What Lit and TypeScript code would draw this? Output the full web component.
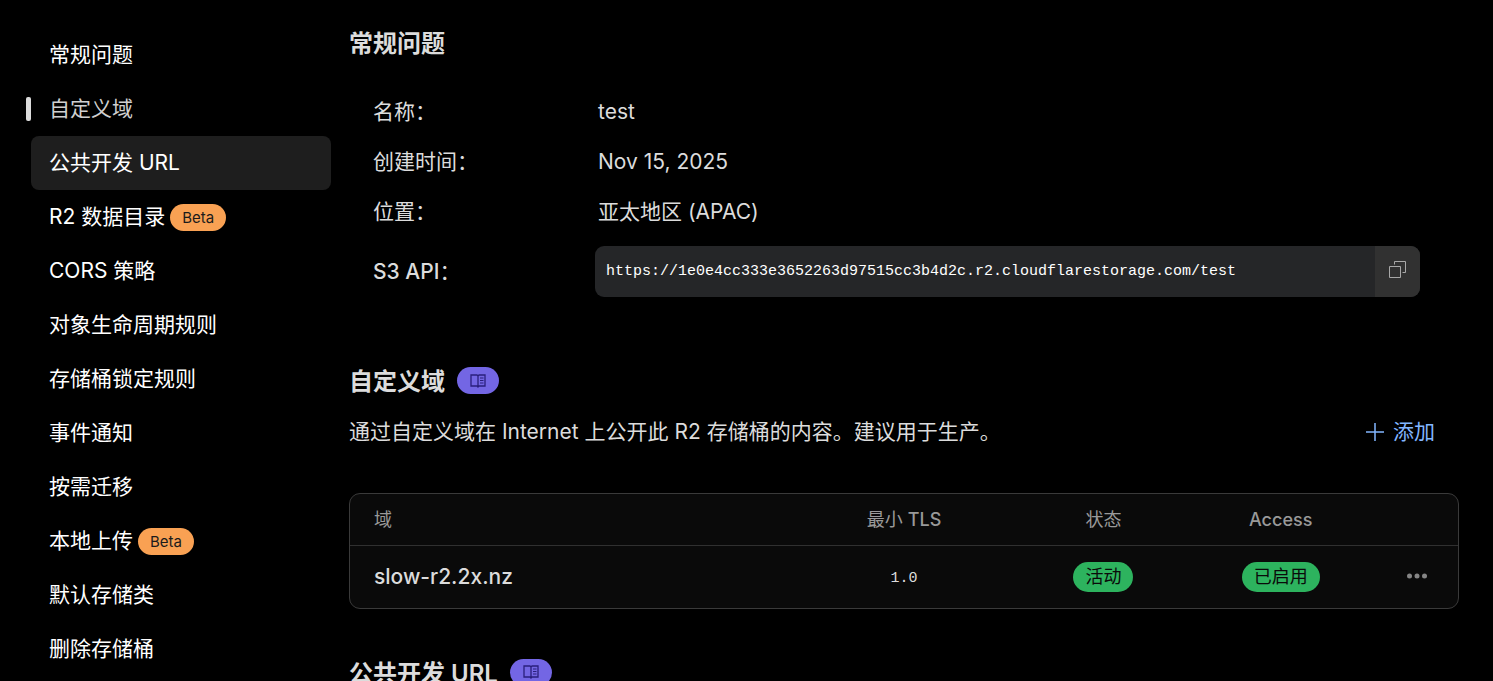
import { LitElement, html, css, svg } from "lit";
import { customElement, property } from "lit/decorators.js";
import { classMap } from "lit/directives/class-map.js";

interface NavItem {
  label: string;
  beta?: boolean;
  current?: boolean;
  hovered?: boolean;
}

const NAV: NavItem[] = [
  { label: "常规问题" },
  { label: "自定义域", current: true },
  { label: "公共开发 URL", hovered: true },
  { label: "R2 数据目录", beta: true },
  { label: "CORS 策略" },
  { label: "对象生命周期规则" },
  { label: "存储桶锁定规则" },
  { label: "事件通知" },
  { label: "按需迁移" },
  { label: "本地上传", beta: true },
  { label: "默认存储类" },
  { label: "删除存储桶" },
];

const bookIcon = svg`
  <path d="M1 2h6l1 1 1-1h6v11H9l-1 1-1-1H1zM8 3v12" fill="none" stroke="currentColor" stroke-width="1.3"/>
  <path d="M10 5h3.5M10 7.5h3.5M10 10h3.5" fill="none" stroke="currentColor" stroke-width="1.2"/>`;

@customElement("side-nav")
export class SideNav extends LitElement {
  static styles = css`
    :host { display: block; }
    .list { list-style: none; margin: 0; padding: 0; }
    .item { display: flex; align-items: center; }
    .marker { flex: 0 0 5px; height: 24px; border-radius: 2px; }
    .current .marker { background: #dcdcdc; }
    .link {
      flex: 1; display: flex; align-items: center; gap: 5px;
      height: 54px; padding: 0 18px; box-sizing: border-box;
      border-radius: 8px; color: #fff; text-decoration: none; white-space: nowrap;
    }
    .current .link { color: #d0d0d0; }
    .hovered .link, .link:hover { background: #1e1e1e; }
    .beta {
      height: 27px; line-height: 27px; padding: 0 12px; border-radius: 14px;
      background: #f9a153; color: #1b1b1b; font-size: 15px;
    }
  `;
  render() {
    return html`<nav aria-label="设置"><ul class="list">
      ${NAV.map((n) => html`
        <li class=${classMap({ item: true, current: !!n.current, hovered: !!n.hovered })}>
          <span class="marker"></span>
          <a class="link" href="#">${n.label}${n.beta ? html`<span class="beta">Beta</span>` : null}</a>
        </li>`)}
    </ul></nav>`;
  }
}

@customElement("section-title")
export class SectionTitle extends LitElement {
  @property() label = "";
  @property({ type: Boolean }) docs = false;
  static styles = css`
    :host { display: flex; align-items: center; gap: 12px; height: 32px; }
    .title { margin: 0; font-size: 24px; line-height: 32px; font-weight: 600; color: #dcdcdc; }
    .docs {
      display: flex; align-items: center; justify-content: center;
      width: 42px; height: 27px; margin-bottom: 3px; border-radius: 14px;
      background: #7366e4; color: #2a1f7c;
    }
  `;
  render() {
    return html`<h2 class="title">${this.label}</h2>
      ${this.docs ? html`<a class="docs" href="#" aria-label="文档">
        <svg width="16" height="16" viewBox="0 0 16 16">${bookIcon}</svg></a>` : null}`;
  }
}

@customElement("app-root")
export class AppRoot extends LitElement {
  static styles = css`
    :host {
      display: flex; gap: 18px; box-sizing: border-box; height: 100vh; overflow: hidden;
      padding: 28px 34px 0 26px; background: #000; color: #dcdcdc;
      font: 400 21px/30px Inter, "Noto Sans CJK SC", sans-serif;
    }
    .side { flex: 0 0 305px; }
    .main { flex: 1; min-width: 0; }
    .facts {
      display: grid; grid-template-columns: 222px 1fr; align-items: center;
      margin: 27px 0 0; padding: 0 39px 0 24px;
    }
    .term, .value { height: 50px; line-height: 50px; margin: 0; }
    .value { padding-left: 3px; }
    .latin { font-weight: 500; }
    .term.api { height: 69px; line-height: 69px; }
    .copybox {
      display: flex; height: 51px; margin: 0; overflow: hidden;
      border-radius: 9px; background: #252628;
    }
    .url {
      flex: 1; min-width: 0; padding: 0 11px; line-height: 51px; color: #fff;
      font-family: "Liberation Mono", monospace; font-size: 15px; white-space: nowrap;
    }
    .copy {
      width: 45px; padding: 0 0 5px; border: 0; background: #313131; color: #a8a8a8;
      display: flex; align-items: center; justify-content: center;
    }
    .domains { margin-top: 60px; }
    .intro { display: flex; justify-content: space-between; align-items: center; margin-top: 19px; padding-right: 24px; }
    .text { margin: 0; }
    .add {
      display: flex; align-items: center; gap: 9px; border: 0; padding: 0;
      background: none; color: #82b6ff; font: inherit;
    }
    .card {
      margin: 46px 0 49px; border: 1px solid #3a3a3a; border-radius: 11px;
      background: #0a0a0a; overflow: hidden;
    }
    .table { width: 100%; border-collapse: collapse; table-layout: fixed; }
    .c-domain { width: 41%; }
    .c-mid { width: 18%; }
    .c-access { width: 14%; }
    .c-menu { width: 9%; }
    .head { height: 51px; padding: 0; font-size: 18px; font-weight: 400; color: #999; border-bottom: 1px solid #303030; }
    .cell { height: 62px; padding: 0; text-align: center; box-sizing: border-box; }
    .head.left, .cell.left { text-align: left; padding-left: 24px; }
    .cell.menu { text-align: right; padding: 0 31px 4px 0; }
    .cell.mono { font-family: "Liberation Mono", monospace; font-size: 15px; padding-top: 4px; }
    .pill {
      display: inline-block; height: 30px; line-height: 30px; padding: 0 12px;
      border-radius: 15px; background: #2db35e; color: #0a0a0a; font-size: 18px; vertical-align: middle;
    }
    .more { border: 0; padding: 0; background: none; color: #858585; display: inline-flex; vertical-align: middle; }
  `;

  render() {
    return html`
      <side-nav class="side"></side-nav>
      <main class="main">
        <section-title label="常规问题"></section-title>
        <dl class="facts">
          <dt class="term">名称：</dt><dd class="value">test</dd>
          <dt class="term">创建时间：</dt><dd class="value">Nov 15, 2025</dd>
          <dt class="term">位置：</dt><dd class="value">亚太地区 (APAC)</dd>
          <dt class="term api"><span class="latin">S3 API</span>：</dt>
          <dd class="copybox">
            <span class="url">https://1e0e4cc333e3652263d97515cc3b4d2c.r2.cloudflarestorage.com/test</span>
            <button class="copy" aria-label="复制">
              <svg width="17" height="17" viewBox="0 0 17 17" fill="none" stroke="currentColor">
                <path d="M.5 5.5h11v11H.5zM5.5 3.5v-3h11v11h-3" />
              </svg>
            </button>
          </dd>
        </dl>

        <section-title class="domains" label="自定义域" docs></section-title>
        <div class="intro">
          <p class="text">通过自定义域在 Internet 上公开此 R2 存储桶的内容。建议用于生产。</p>
          <button class="add">
            <svg width="18" height="18" viewBox="0 0 18 18" stroke="currentColor" stroke-width="1.5"><path d="M9 0v18M0 9h18" /></svg>添加
          </button>
        </div>

        <div class="card">
          <table class="table">
            <colgroup><col class="c-domain" /><col class="c-mid" /><col class="c-mid" /><col class="c-access" /><col class="c-menu" /></colgroup>
            <thead><tr>
              <th class="head left" scope="col">域</th>
              <th class="head" scope="col">最小 <span class="latin">TLS</span></th>
              <th class="head" scope="col">状态</th>
              <th class="head" scope="col"><span class="latin">Access</span></th>
              <td class="head"></td>
            </tr></thead>
            <tbody><tr>
              <td class="cell left"><span class="latin">slow-r2.2x.nz</span></td>
              <td class="cell mono">1.0</td>
              <td class="cell"><span class="pill">活动</span></td>
              <td class="cell"><span class="pill">已启用</span></td>
              <td class="cell menu"><button class="more" aria-label="更多操作">
                <svg width="20" height="6" viewBox="0 0 20 6" fill="currentColor"><circle cx="2.5" cy="3" r="2.5" /><circle cx="10" cy="3" r="2.5" /><circle cx="17.5" cy="3" r="2.5" /></svg>
              </button></td>
            </tr></tbody>
          </table>
        </div>

        <section-title label="公共开发 URL" docs></section-title>
      </main>`;
  }
}
